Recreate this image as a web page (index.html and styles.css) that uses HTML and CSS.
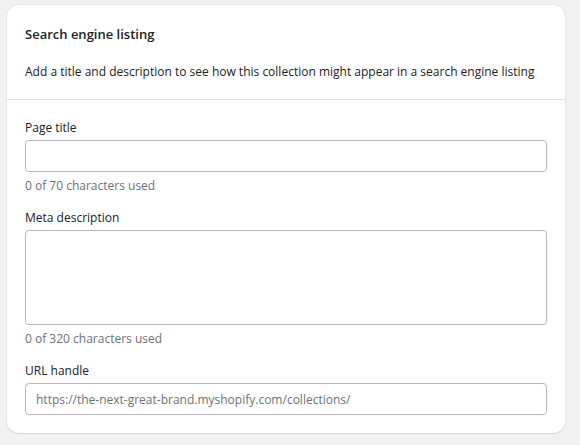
FILE: index.html
```html
<!DOCTYPE html>
<html>
<head>
<meta charset="utf-8">
<link rel="stylesheet" href="styles.css">
</head>
<body>
<div class="card">
  <div class="card-head">
    <h2 class="title">Search engine listing</h2>
    <p class="desc">Add a title and description to see how this collection might appear in a search engine listing</p>
  </div>
  <div class="card-body">
    <div class="field">
      <label class="label">Page title</label>
      <div class="input"></div>
      <div class="help">0 of 70 characters used</div>
    </div>
    <div class="field">
      <label class="label">Meta description</label>
      <div class="input textarea"></div>
      <div class="help">0 of 320 characters used</div>
    </div>
    <div class="field">
      <label class="label">URL handle</label>
      <div class="input url"><span class="prefix">https://the-next-great-brand.myshopify.com/collections/</span></div>
    </div>
  </div>
</div>
</body>
</html>
```

FILE: styles.css
```css
html, body {
  margin: 0;
  padding: 0;
  background: #f1f1f1;
}
body {
  padding: 5px 15px 12px 7px;
  font-family: "Open Sans", "Noto Sans", sans-serif;
  font-size: 12px;
  color: #202223;
}
.card {
  background: #fff;
  border-radius: 12px;
  box-shadow: 0 1px 0 rgba(0,0,0,0.08), 0 0 0 1px rgba(0,0,0,0.04);
  height: 428px;
  box-sizing: border-box;
}
.card-head {
  padding: 19px 18px 0 18px;
  height: 95px;
  border-bottom: 1px solid #e3e3e3;
  box-sizing: border-box;
}
.title {
  margin: 0;
  font-size: 13px;
  font-weight: 600;
  line-height: 20px;
}
.desc {
  margin: 18px 0 0 0;
  line-height: 20px;
}
.card-body {
  padding: 17px 18px 0 18px;
}
.field {
  margin-bottom: 11px;
}
.label {
  display: block;
  line-height: 20px;
  padding-top: 1px;
  margin-bottom: 2px;
}
.input {
  height: 32px;
  border: 1px solid #b5b9bd;
  border-radius: 4px;
  box-sizing: border-box;
}
.textarea {
  height: 95px;
}
.help {
  color: #6d7175;
  line-height: 20px;
  margin-top: 4px;
}
.url {
  display: flex;
  align-items: center;
  padding-left: 10px;
}
.prefix {
  color: #6d7175;
}
```
